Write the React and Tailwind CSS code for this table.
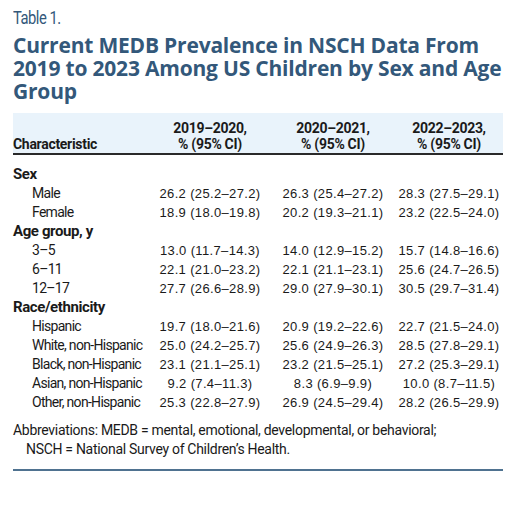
const rows = [
  { type: "section", label: "Sex" },
  { label: "Male", v: ["26.2 (25.2–27.2)", "26.3 (25.4–27.2)", "28.3 (27.5–29.1)"] },
  { label: "Female", v: ["18.9 (18.0–19.8)", "20.2 (19.3–21.1)", "23.2 (22.5–24.0)"] },
  { type: "section", label: "Age group, y" },
  { label: "3–5", v: ["13.0 (11.7–14.3)", "14.0 (12.9–15.2)", "15.7 (14.8–16.6)"] },
  { label: "6–11", v: ["22.1 (21.0–23.2)", "22.1 (21.1–23.1)", "25.6 (24.7–26.5)"] },
  { label: "12–17", v: ["27.7 (26.6–28.9)", "29.0 (27.9–30.1)", "30.5 (29.7–31.4)"] },
  { type: "section", label: "Race/ethnicity" },
  { label: "Hispanic", v: ["19.7 (18.0–21.6)", "20.9 (19.2–22.6)", "22.7 (21.5–24.0)"] },
  { label: "White, non-Hispanic", v: ["25.0 (24.2–25.7)", "25.6 (24.9–26.3)", "28.5 (27.8–29.1)"] },
  { label: "Black, non-Hispanic", v: ["23.1 (21.1–25.1)", "23.2 (21.5–25.1)", "27.2 (25.3–29.1)"] },
  { label: "Asian, non-Hispanic", v: ["9.2 (7.4–11.3)", "8.3 (6.9–9.9)", "10.0 (8.7–11.5)"] },
  { label: "Other, non-Hispanic", v: ["25.3 (22.8–27.9)", "26.9 (24.5–29.4)", "28.2 (26.5–29.9)"] },
];

const grid = "grid grid-cols-[136px_122px_124px_1fr]";
const narrow = "font-['Roboto',sans-serif]";

export default function App() {
  return (
    <div className="w-[515px] h-[505px] bg-white px-[13px] pt-[6px] pr-[12px]">
      <div className={`${narrow} text-[18px] text-[#33587a] leading-[24px] tracking-[-0.6px]`}>
        <span className="inline-block origin-left scale-x-[0.82]">Table 1.</span>
      </div>
      <h1 className="font-['Open_Sans',sans-serif] font-bold text-[21px] leading-[23px] text-[#33587a] tracking-[-0.2px] mt-[4px]">
        Current MEDB Prevalence in NSCH Data From 2019 to 2023 Among US Children by Sex and Age Group
      </h1>

      <div className={`${grid} mt-[10px] bg-[#e9f3fb] border-b-2 border-[#2a2a2a] h-[42px] ${narrow} font-bold text-[14px] leading-[16px] text-[#1a1a1a] tracking-[-0.3px]`}>
        <div className="self-end pb-[1px]">Characteristic</div>
        <div className="self-end text-center pb-[1px]">2019–2020,<br />% (95% CI)</div>
        <div className="self-end text-center pb-[1px]">2020–2021,<br />% (95% CI)</div>
        <div className="self-end text-center pb-[1px]">2022–2023,<br />% (95% CI)</div>
      </div>

      <div className="pt-[10px]">
        {rows.map((r, i) =>
          r.type === "section" ? (
            <div key={i} className={`${narrow} font-bold text-[15px] h-[19px] leading-[19px] text-[#1a1a1a] tracking-[-0.4px]`}>
              {r.label}
            </div>
          ) : (
            <div key={i} className={`${grid} h-[19px] leading-[19px] text-[#1a1a1a]`}>
              <div className={`${narrow} pl-[19px] text-[14px] tracking-[-0.7px] whitespace-nowrap`}>{r.label}</div>
              {r.v.map((v, j) => (
                <div key={j} className="text-center font-['Liberation_Sans',sans-serif] text-[13px] tracking-[0.35px] whitespace-nowrap">
                  {v}
                </div>
              ))}
            </div>
          )
        )}
      </div>

      <div className={`${narrow} text-[14px] leading-[19px] text-[#1a1a1a] tracking-[-0.3px] mt-[9px] pb-[10px] border-b-2 border-[#4f7290]`}>
        <div>Abbreviations: MEDB = mental, emotional, developmental, or behavioral;</div>
        <div className="pl-[13px]">NSCH = National Survey of Children’s Health.</div>
      </div>
    </div>
  );
}
